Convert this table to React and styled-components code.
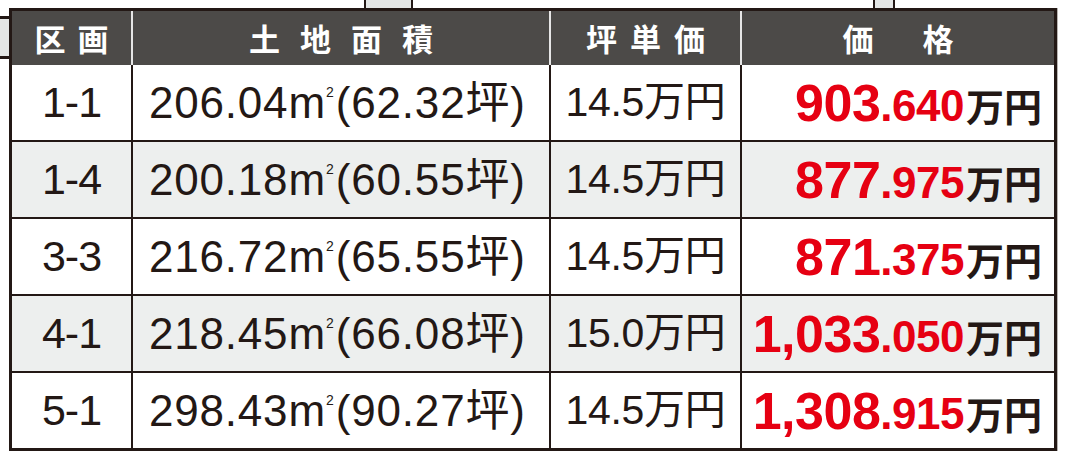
import React from "react";
import styled, { createGlobalStyle } from "styled-components";

const INK = "#231815";
const RED = "#e60012";
const COLS = "119px 418px 191px 314px";

const GlobalStyle = createGlobalStyle`
  body {
    margin: 0;
    background: #ffffff;
  }
`;

const Page = styled.div`
  width: 1066px;
  height: 462px;
  overflow: hidden;
  font-family: "Liberation Sans", "Noto Sans CJK JP", sans-serif;
  color: ${INK};
`;

const TopStrip = styled.div`
  display: flex;
  height: 8px;
`;

const EdgeTab = styled.div`
  box-sizing: border-box;
  width: ${(p) => p.$w}px;
  margin-left: ${(p) => p.$gap}px;
  background: #e4e6e5;
  border-left: 2px solid ${INK};
  border-right: 2px solid ${INK};
`;

const Main = styled.div`
  display: flex;
  align-items: flex-start;
`;

const SideTab = styled.div`
  box-sizing: border-box;
  width: 9px;
  height: 43px;
  margin-top: 8px;
  background: #e4e6e5;
  border-top: 3px solid ${INK};
  border-bottom: 3px solid ${INK};
`;

const Table = styled.div`
  box-sizing: border-box;
  width: 1048px;
  border: 3px solid ${INK};
  box-shadow: 1px 0 0 #b8b4b1;
`;

const HeadRow = styled.div`
  display: grid;
  grid-template-columns: ${COLS};
  height: 54px;
  background: #4c4a48;
`;

const HeadCell = styled.div`
  display: flex;
  align-items: center;
  justify-content: center;
  padding-left: ${(p) => p.$sp}px;
  padding-bottom: 2px;
  color: #ffffff;
  font-family: "Noto Sans CJK JP", sans-serif;
  font-weight: 700;
  font-size: 31px;
  letter-spacing: ${(p) => p.$sp}px;
  border-left: 2px solid #e6e6e6;
  &:first-child {
    border-left: none;
  }
`;

const Row = styled.div`
  display: grid;
  grid-template-columns: ${COLS};
  height: 75px;
  background: ${(p) => (p.$alt ? "#edefee" : "#ffffff")};
  & + & {
    border-top: 2px solid ${INK};
  }
`;

const Cell = styled.div`
  display: flex;
  align-items: center;
  justify-content: ${(p) => p.$justify || "center"};
  padding: 0 ${(p) => p.$pr || 0}px 0 ${(p) => p.$pl || 0}px;
  white-space: nowrap;
  line-height: 1;
  border-left: 2px solid ${INK};
  &:first-child {
    border-left: none;
  }
`;

const Lot = styled.span`
  font-size: 43px;
  letter-spacing: -1px;
`;

const Area = styled.span`
  font-size: 44px;
  letter-spacing: 0.8px;
`;

const Unit = styled.span`
  letter-spacing: 0;
`;

const Sq = styled.span`
  font-size: 14px;
  vertical-align: 21px;
  margin-left: 1px;
  margin-right: 2px;
  letter-spacing: 0;
`;

const Rate = styled.span`
  font-size: 41px;
  letter-spacing: -0.3px;
`;

const PriceInt = styled.span`
  color: ${RED};
  font-weight: 700;
  font-size: 52px;
  letter-spacing: -0.5px;
`;

const PriceDec = styled.span`
  color: ${RED};
  font-weight: 700;
  font-size: 44px;
  letter-spacing: -0.5px;
`;

const Yen = styled.span`
  font-family: "Noto Sans CJK JP", sans-serif;
  font-weight: 700;
  font-size: 38px;
  margin-left: 2px;
`;

const headers = [
  { label: "区画", sp: 12 },
  { label: "土地面積", sp: 20 },
  { label: "坪単価", sp: 13 },
  { label: "価格", sp: 49 },
];

const lots = [
  { lot: "1-1", area: "206.04", tsubo: "62.32", rate: "14.5", whole: "903", frac: ".640" },
  { lot: "1-4", area: "200.18", tsubo: "60.55", rate: "14.5", whole: "877", frac: ".975" },
  { lot: "3-3", area: "216.72", tsubo: "65.55", rate: "14.5", whole: "871", frac: ".375" },
  { lot: "4-1", area: "218.45", tsubo: "66.08", rate: "15.0", whole: "1,033", frac: ".050" },
  { lot: "5-1", area: "298.43", tsubo: "90.27", rate: "14.5", whole: "1,308", frac: ".915" },
];

const App = () => {
  return (
    <Page>
      <GlobalStyle />
      <TopStrip>
        <EdgeTab $gap={364} $w={49} />
        <EdgeTab $gap={460} $w={22} />
      </TopStrip>
      <Main>
        <SideTab />
        <Table>
          <HeadRow>
            {headers.map((h) => (
              <HeadCell key={h.label} $sp={h.sp}>
                {h.label}
              </HeadCell>
            ))}
          </HeadRow>
          {lots.map((r, i) => (
            <Row key={r.lot} $alt={i % 2 === 1}>
              <Cell>
                <Lot>{r.lot}</Lot>
              </Cell>
              <Cell $justify="flex-start" $pl={16}>
                <Area>
                  {r.area}
                  <Unit>m</Unit>
                  <Sq>2</Sq>({r.tsubo}坪)
                </Area>
              </Cell>
              <Cell>
                <Rate>{r.rate}万円</Rate>
              </Cell>
              <Cell $justify="flex-end" $pr={12}>
                <span>
                  <PriceInt>{r.whole}</PriceInt>
                  <PriceDec>{r.frac}</PriceDec>
                  <Yen>万円</Yen>
                </span>
              </Cell>
            </Row>
          ))}
        </Table>
      </Main>
    </Page>
  );
};

export default App;
